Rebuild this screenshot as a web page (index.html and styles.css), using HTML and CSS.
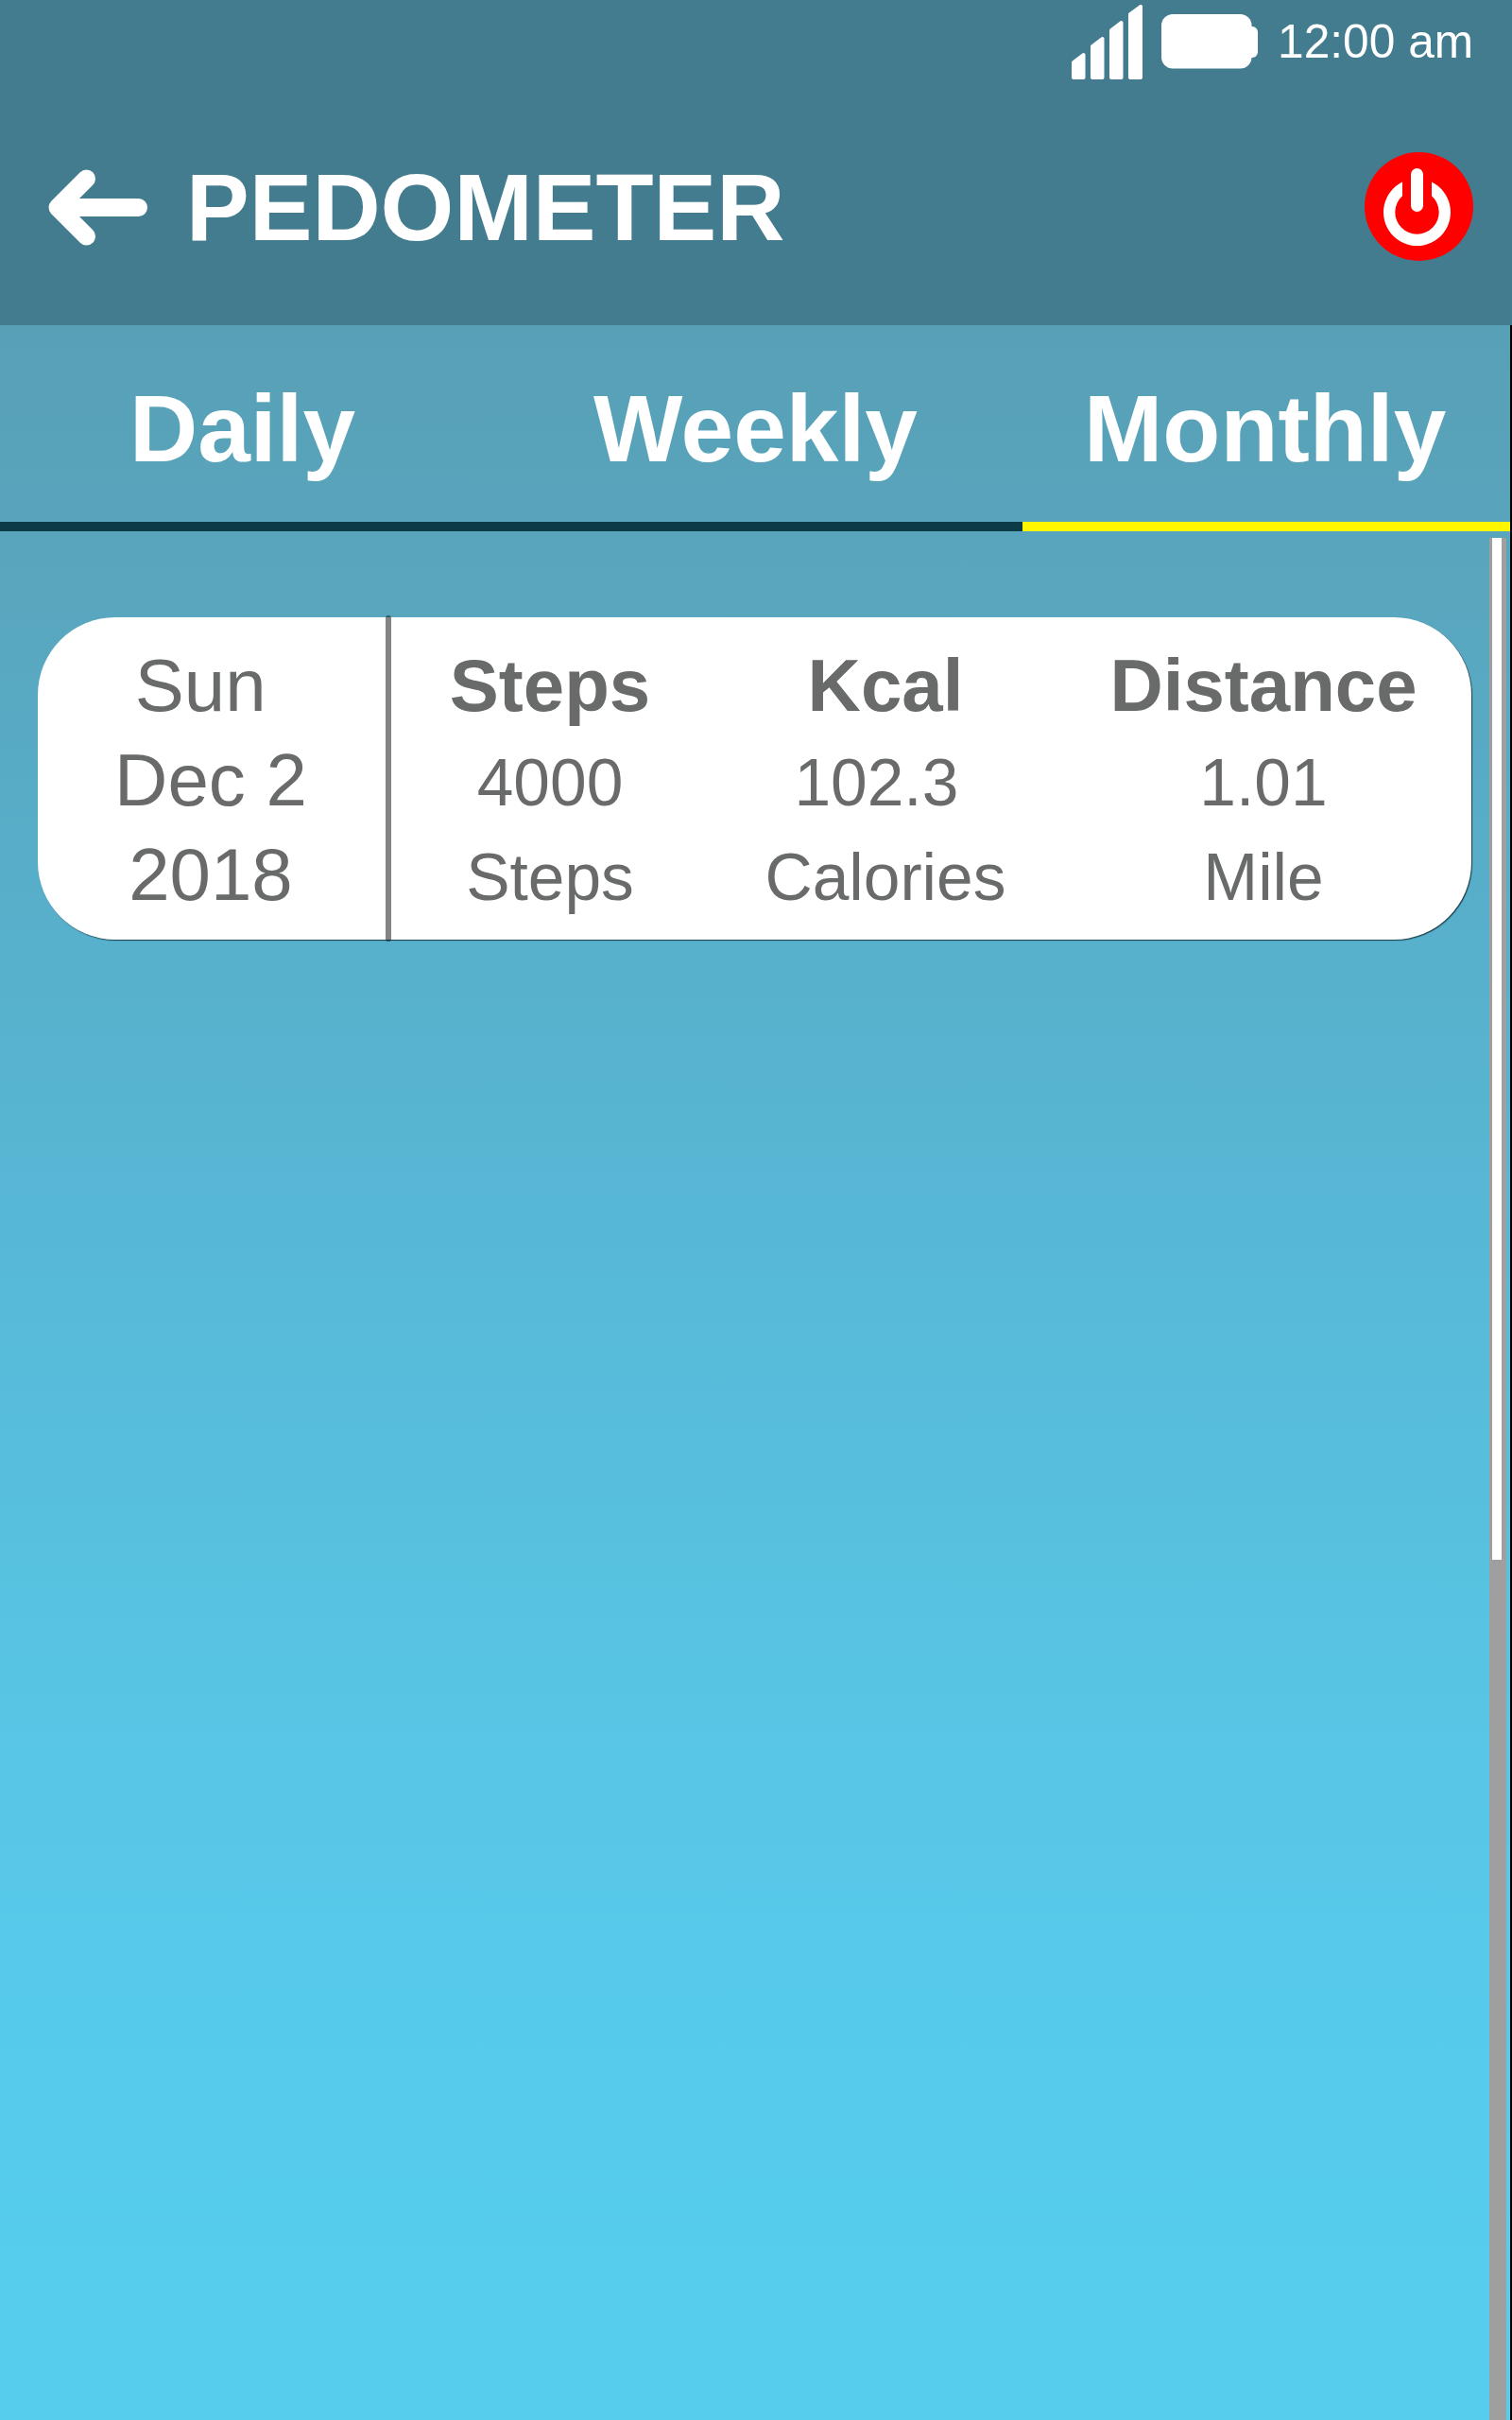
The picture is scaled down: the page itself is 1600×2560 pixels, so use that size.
FILE: index.html
```html
<!DOCTYPE html>
<html lang="en">
<head>
    <meta charset="UTF-8">
    <meta name="viewport" content="width=device-width, initial-scale=1.0">
    <title>Pedometer</title>
    <link rel="stylesheet" href="styles.css">
</head>
<body>
    <header class="header">
        <div class="status-bar">
            <svg class="signal" width="76" height="80" viewBox="0 0 76 80" fill="#fff" stroke="#fff" stroke-width="4" stroke-linejoin="round">
                <path d="M2 61 L12.5 53 V77 H2 Z"/>
                <path d="M22 44 L32.5 36 V77 H22 Z"/>
                <path d="M42 27 L52.5 19 V77 H42 Z"/>
                <path d="M62 10 L73 2 V77 H62 Z"/>
            </svg>
            <svg class="battery" width="102" height="58" viewBox="0 0 102 58" fill="#fff">
                <rect x="0" y="0" width="95.5" height="57.5" rx="12"/>
                <rect x="86" y="13" width="16" height="33" rx="6"/>
            </svg>
            <span class="time">12:00 am</span>
        </div>
        <div class="title-bar">
            <svg class="back" width="106" height="82" viewBox="0 0 106 82" fill="none" stroke="#fff" stroke-width="19" stroke-linecap="round" stroke-linejoin="round">
                <path d="M41.5 11 L11 41.5 L41.5 72 M11 41.5 H96.5"/>
            </svg>
            <h1 class="title">PEDOMETER</h1>
            <svg class="power" width="115" height="115" viewBox="0 0 115 115">
                <circle cx="57.5" cy="57.5" r="57.5" fill="#f00"/>
                <path fill="#fff" d="M40 31.6 A35.5 35.5 0 1 0 71 31.6 V46.2 A23.2 23.2 0 1 1 40 46.2 Z"/>
                <rect x="49" y="17" width="13" height="46" rx="6.5" fill="#fff"/>
            </svg>
        </div>
    </header>

    <nav class="tabs">
        <div class="tab tab-daily">Daily</div>
        <div class="tab tab-weekly">Weekly</div>
        <div class="tab tab-monthly active">Monthly</div>
    </nav>

    <main class="content">
        <div class="card">
            <div class="date">
                <div>Sun&nbsp;</div>
                <div>Dec 2</div>
                <div>2018</div>
            </div>
            <div class="divider"></div>
            <div class="stat">
                <div class="label">Steps</div>
                <div>4000</div>
                <div>Steps</div>
            </div>
            <div class="stat">
                <div class="label">Kcal</div>
                <div>102.3&nbsp;</div>
                <div>Calories</div>
            </div>
            <div class="stat">
                <div class="label">Distance</div>
                <div>1.01</div>
                <div>Mile</div>
            </div>
        </div>
        <div class="scrollbar">
            <div class="thumb"></div>
        </div>
    </main>
</body>
</html>
```
FILE: styles.css
```css
* {
    margin: 0;
    padding: 0;
    box-sizing: border-box;
}

body {
    display: flex;
    flex-direction: column;
    width: 1600px;
    height: 2560px;
    font-family: "Liberation Sans", Arial, sans-serif;
    background: linear-gradient(#58a0b6 344px, #59a6be 620px, #57b0cc 1000px, #57bcda 1450px, #58c6e6 1850px, #56cbec 2200px, #57cdee 2560px);
}

.header {
    height: 344px;
    background-color: #427c8e;
    color: #fff;
}

.status-bar {
    display: flex;
    height: 88px;
    padding-left: 1134px;
}

.signal {
    margin-top: 5px;
}

.battery {
    margin: 15px 0 0 19px;
}

.time {
    margin-left: 21px;
    font-size: 49.7px;
    line-height: 89px;
}

.title-bar {
    display: flex;
    align-items: center;
    height: 261px;
    padding: 0 41px 0 50px;
}

.title {
    flex: 1;
    margin-left: 41px;
    font-size: 100px;
    line-height: 120px;
}

.tabs {
    display: grid;
    grid-template-columns: 520px 562px 516px;
    height: 218px;
}

.tab {
    padding-top: 49px;
    border-bottom: 10px solid #0c3a45;
    color: #fff;
    font-size: 100px;
    font-weight: bold;
    line-height: 120px;
}

.tab-daily {
    padding-left: 137px;
}

.tab-weekly {
    padding-left: 108px;
}

.tab-monthly {
    padding-left: 65px;
}

.tab.active {
    border-bottom-color: #fff600;
}

.content {
    display: flex;
    flex: 1;
    align-items: flex-start;
    justify-content: space-between;
    padding-left: 40px;
}

/* black edge down the right side, below the header */
.tabs,
.content {
    width: 1600px;
    border-right: 2px solid #000;
}

.card {
    display: grid;
    grid-template-columns: 368px 6px 336px 374px 426px;
    width: 1517px;
    height: 341px;
    margin-top: 91px;
    border-radius: 82px;
    background-color: #fff;
    box-shadow: 1px 1px 1px #1c3f4a;
    color: #696a6a;
    text-align: center;
    line-height: 100px;
}

.date {
    padding: 22px 2px 0 0;
    font-size: 78px;
}

.divider {
    height: 345px;
    margin-top: -2px;
    border-radius: 3px;
    background-color: rgba(10, 10, 10, 0.5);
}

.stat {
    padding-top: 22px;
    font-size: 69.5px;
}

.label {
    margin-bottom: 3px;
    font-size: 78px;
    font-weight: bold;
}

.scrollbar {
    width: 18px;
    height: 1991px;
    margin: 7px 4px 0 0;
    padding-left: 3px;
    background-color: #9f9f9f;
}

.thumb {
    width: 10px;
    height: 1081px;
    background-color: #fff;
}
```
